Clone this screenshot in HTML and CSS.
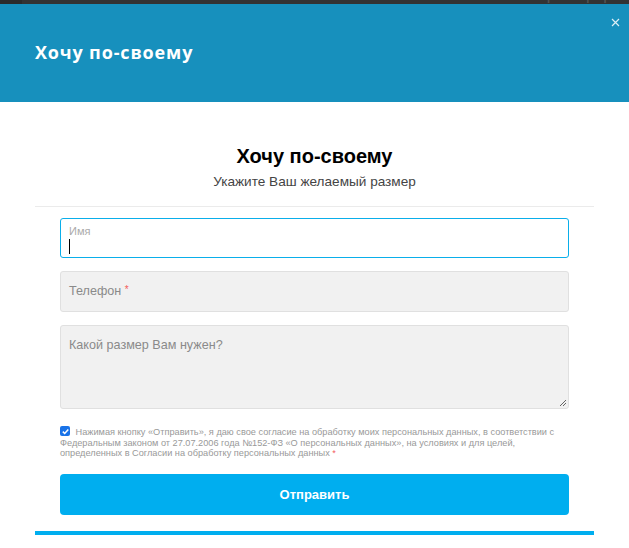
FILE: index.html
```html
<!DOCTYPE html>
<html lang="ru">
<head>
  <meta charset="UTF-8" />
  <meta name="viewport" content="width=device-width, initial-scale=1" />
  <title>Хочу по-своему</title>
  <link rel="stylesheet" href="styles.css">
</head>
<body>

  <!-- page behind the popup, only its bottom edge shows -->
  <div class="topbar">
    <span class="topbar-link">Механизм трансформации</span>
  </div>

  <div class="popup-head">
    <h2 class="popup-title">Хочу по-своему</h2>
    <button class="popup-close" aria-label="Закрыть">
      <svg width="9" height="9" viewBox="0 0 9 9"><path d="M1 1L8 8M8 1L1 8" stroke="#fff" stroke-width="1.2" fill="none"/></svg>
    </button>
  </div>

  <div class="popup-body">
    <h3 class="form-title">Хочу по-своему</h3>
    <p class="form-sub">Укажите Ваш желаемый размер</p>
    <div class="divider"></div>

    <form class="form">
      <div class="field field-active">
        <label class="field-label" for="name">Имя</label>
        <div class="field-caret"></div>
      </div>

      <div class="field field-empty">
        <span class="placeholder">Телефон <span class="req">*</span></span>
      </div>

      <div class="field field-area">
        <span class="placeholder">Какой размер Вам нужен?</span>
        <svg class="resize" width="8" height="8" viewBox="0 0 8 8"><path d="M7 1L1 7M7 4L4 7" stroke="#555" stroke-width="0.9" fill="none"/></svg>
      </div>

      <div class="agree">
        <span class="agree-box">
          <svg width="9" height="9" viewBox="0 0 9 9"><path d="M1.8 4.6L3.7 6.5L7.3 2.4" stroke="#fff" stroke-width="1.5" fill="none"/></svg>
        </span>
        Нажимая кнопку «Отправить», я даю свое согласие на обработку моих персональных данных, в соответствии с Федеральным законом от 27.07.2006 года №152-ФЗ «О персональных данных», на условиях и для целей, определенных в Согласии на обработку персональных данных <span class="req-small">*</span>
      </div>

      <button type="button" class="submit">Отправить</button>
    </form>

    <div class="bottom-line"></div>
  </div>

</body>
</html>
```

FILE: styles.css
```css
body {
  margin: 0;
  background: #fff;
  font-family: 'Liberation Sans', Arial, sans-serif;
  overflow: hidden;
}

.topbar {
  height: 4px;
  background: #333;
  border-left: 22px solid #2b2b2b;
  position: relative;
  overflow: hidden;
}

.topbar-link {
  position: absolute;
  left: 438px;
  top: -14px;
  font-size: 16px;
  color: #555;
  white-space: nowrap;
}

.popup-head {
  height: 98px;
  background: #1790bd;
  display: flex;
  align-items: center;
  padding-left: 35px;
  position: relative;
}

.popup-title {
  margin: 0 0 2px;
  font-family: 'Open Sans', sans-serif;
  font-size: 18px;
  font-weight: 700;
  color: #fff;
  letter-spacing: 0.85px;
}

.popup-close {
  position: absolute;
  right: 9px;
  top: 14px;
  padding: 0;
  border: none;
  background: none;
  line-height: 0;
  cursor: pointer;
  opacity: 0.85;
}

.popup-body {
  padding: 42px 35px 0;
}

.form-title {
  margin: 0;
  text-align: center;
  font-size: 20px;
  line-height: 24px;
  font-weight: 700;
  color: #000;
}

.form-sub {
  margin: 6px 0 0;
  text-align: center;
  font-size: 13.6px;
  line-height: 16px;
  color: #444;
}

.divider {
  margin-top: 16px;
  height: 1px;
  background: #ebebeb;
}

.form {
  padding: 11px 25px 0;
}

.field {
  box-sizing: border-box;
  height: 41px;
  border: 1px solid #e0e0e0;
  border-radius: 3px;
  background: #f1f1f1;
  padding: 0 8px;
  margin-bottom: 13px;
  position: relative;
}

.field-active {
  height: 40px;
  background: #fff;
  border-color: #0aaeea;
  padding-top: 6px;
}

.field-label {
  display: block;
  font-size: 11px;
  line-height: 13px;
  color: #aaa;
}

.field-caret {
  width: 1px;
  height: 15px;
  margin-top: 1px;
  background: #000;
}

.field-empty {
  display: flex;
  align-items: center;
  padding-bottom: 2px;
}

.placeholder {
  font-size: 12.6px;
  color: #8a8a8a;
}

.req {
  color: #f35b5b;
  font-size: 10px;
  vertical-align: top;
}

.req-small {
  color: #f35b5b;
}

.field-area {
  height: 84px;
  padding-top: 9px;
  margin-bottom: 0;
}

.resize {
  position: absolute;
  right: 1px;
  bottom: 1px;
}

.agree {
  margin-top: 17px;
  font-size: 9.2px;
  line-height: 10.5px;
  color: #999;
}

.agree-box {
  display: inline-block;
  box-sizing: border-box;
  width: 10px;
  height: 10px;
  background: #1a73e8;
  border-radius: 2px;
  vertical-align: -1px;
  line-height: 0;
  margin-right: 3px;
}

.agree-box svg {
  margin: 0.5px;
}

.submit {
  display: block;
  width: 100%;
  height: 41px;
  margin-top: 15px;
  border: none;
  border-radius: 4px;
  background: #00aeef;
  color: #fff;
  font-family: 'Liberation Sans', Arial, sans-serif;
  font-size: 13px;
  font-weight: 700;
  cursor: pointer;
}

.bottom-line {
  margin-top: 16px;
  height: 4px;
  background: #00aeef;
}
```
